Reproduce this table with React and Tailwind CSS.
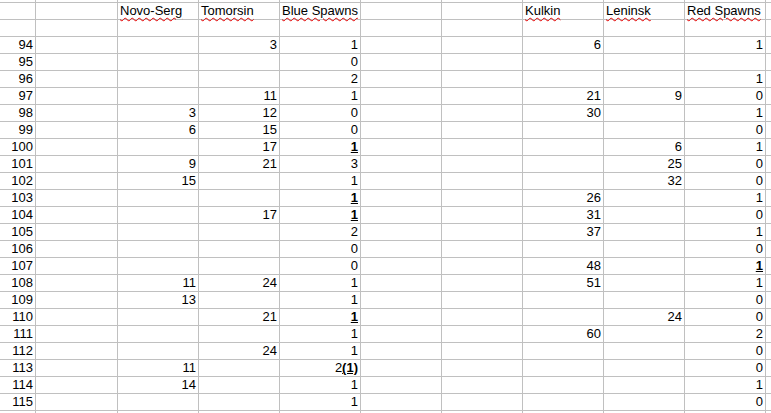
const widths = [
  "w-[36px]",
  "w-[82px]",
  "w-[81px]",
  "w-[81px]",
  "w-[81px]",
  "w-[81px]",
  "w-[81px]",
  "w-[81px]",
  "w-[81px]",
  "w-[81px]",
  "w-[81px]",
];

const headers = {
  2: "Novo-Serg",
  3: "Tomorsin",
  4: "Blue Spawns",
  7: "Kulkin",
  8: "Leninsk",
  9: "Red Spawns",
};

// row: [num, novo, tomorsin, blue, kulkin, leninsk, red]
const rows = [
  [94, "", 3, 1, 6, "", 1],
  [95, "", "", 0, "", "", ""],
  [96, "", "", 2, "", "", 1],
  [97, "", 11, 1, 21, 9, 0],
  [98, 3, 12, 0, 30, "", 1],
  [99, 6, 15, 0, "", "", 0],
  [100, "", 17, "*1", "", 6, 1],
  [101, 9, 21, 3, "", 25, 0],
  [102, 15, "", 1, "", 32, 0],
  [103, "", "", "*1", 26, "", 1],
  [104, "", 17, "*1", 31, "", 0],
  [105, "", "", 2, 37, "", 1],
  [106, "", "", 0, "", "", 0],
  [107, "", "", 0, 48, "", "*1"],
  [108, 11, 24, 1, 51, "", 1],
  [109, 13, "", 1, "", "", 0],
  [110, "", 21, "*1", "", 24, 0],
  [111, "", "", 1, 60, "", 2],
  [112, "", 24, 1, "", "", 0],
  [113, 11, "", "2(1)", "", "", 0],
  [114, 14, "", 1, "", "", 1],
  [115, "", "", 1, "", "", 0],
];

function Value({ v }) {
  if (v === "" || v === undefined) return null;
  const s = String(v);
  if (s.startsWith("*")) {
    return <span className="font-bold underline">{s.slice(1)}</span>;
  }
  if (s === "2(1)") {
    return (
      <span>
        2<span className="font-bold underline">(1)</span>
      </span>
    );
  }
  return <span>{s}</span>;
}

function Cell({ col, children, left, h = "h-[17px]" }) {
  return (
    <div
      className={`${widths[col]} ${h} shrink-0 border-b border-r border-[#c0c0c0] whitespace-nowrap leading-[16px] ${
        left ? "pl-[2px] text-left" : "pr-[2px] text-right"
      }`}
    >
      {children}
    </div>
  );
}

function Row({ cells, left, h }) {
  return (
    <div className="flex">
      {widths.map((_, i) => (
        <Cell key={i} col={i} left={left} h={h}>
          {cells[i]}
        </Cell>
      ))}
    </div>
  );
}

export default function App() {
  const headerCells = widths.map((_, i) =>
    headers[i] ? (
      <span className="underline decoration-wavy decoration-[#e00000] decoration-1 underline-offset-[2px]">
        {headers[i]}
      </span>
    ) : null
  );

  return (
    <div className="h-[413px] w-[771px] overflow-hidden bg-white font-['Liberation_Sans',Arial,sans-serif] text-[13px] text-black">
      <Row cells={[]} h="h-[3px]" />
      <Row cells={headerCells} left />
      <Row cells={[]} />
      {rows.map((r) => {
        const cells = [];
        cells[0] = <Value v={r[0]} />;
        cells[2] = <Value v={r[1]} />;
        cells[3] = <Value v={r[2]} />;
        cells[4] = <Value v={r[3]} />;
        cells[7] = <Value v={r[4]} />;
        cells[8] = <Value v={r[5]} />;
        cells[9] = <Value v={r[6]} />;
        return <Row key={r[0]} cells={cells} />;
      })}
      <Row cells={[]} />
    </div>
  );
}
